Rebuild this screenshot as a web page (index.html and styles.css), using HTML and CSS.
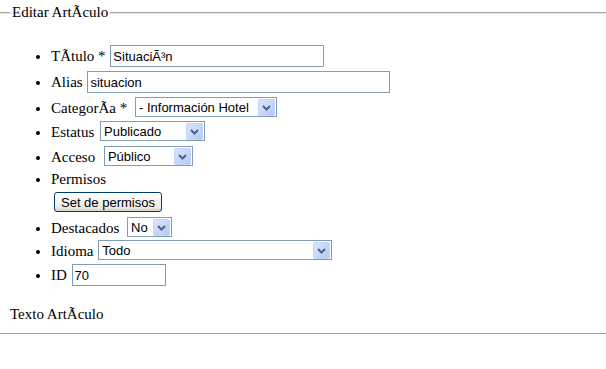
FILE: index.html
```html
<!doctype html>
<html lang="es">
<head>
  <meta charset="utf-8">
  <title>Editar ArtÃculo</title>
  <link rel="stylesheet" href="styles.css">
</head>
<body>
  <form class="edit-form">
    <fieldset class="edit-box">
      <legend>Editar ArtÃculo</legend>
      <ul class="field-list">
        <li class="row-txt">TÃtulo * <input class="txt txt-title" type="text" value="SituaciÃ³n"></li>
        <li class="row-txt">Alias <input class="txt txt-alias" type="text" value="situacion"></li>
        <li class="row-cat">CategorÃa * <select class="sel sel-cat"><option>- Información Hotel</option></select></li>
        <li class="row-sel">Estatus <select class="sel sel-status"><option>Publicado</option></select></li>
        <li class="row-sel">Acceso <select class="sel sel-access"><option>Público</option></select></li>
        <li class="row-perm">Permisos
          <div class="perm-btn-row"><button type="button" class="btn">Set de permisos</button></div>
        </li>
        <li class="row-feat">Destacados <select class="sel sel-featured"><option>No</option></select></li>
        <li class="row-lang">Idioma <select class="sel sel-lang"><option>Todo</option></select></li>
        <li class="row-id">ID <input class="txt txt-id" type="text" value="70"></li>
      </ul>
      <p class="body-label">Texto ArtÃculo</p>
    </fieldset>
  </form>
</body>
</html>
```

FILE: styles.css
```css
html, body {
  margin: 0;
  background: #fff;
  overflow: hidden;
}

body {
  font-family: 'Liberation Serif', 'Times New Roman', serif;
  font-size: 15px;
  color: #000;
}

.edit-box {
  margin: 4px -10px 0 0;
  padding: 0 0 10px 10px;
  border: 0;
  border-top: 1px solid #a3a49a;
  border-bottom: 1px solid #a3a49a;
  box-shadow: inset 0 1px 0 #e6e6de, 0 1px 0 #e6e6de;
}

.edit-box legend {
  padding: 0 2px;
  line-height: 17px;
}

.field-list {
  margin: 24px 0 0;
  padding-left: 41px;
}

.field-list li {
  line-height: 22px;
  height: 24px;
}

/* per-row heights to follow the original spacing */
.field-list .row-txt { height: 26px; }
.field-list .row-sel { height: 25px; }
.field-list .row-feat { height: 23px; }
.field-list .row-id { height: 22px; }

.field-list .row-perm {
  height: auto;
  line-height: 17px;
}

.txt,
.sel {
  font-family: 'Liberation Sans', Arial, sans-serif;
  font-size: 13px;
  color: #000;
  vertical-align: top;
  box-sizing: border-box;
  border: 1px solid #7f9db9;
  background-color: #fff;
  margin: 0 0 0 1px;
}

.txt {
  height: 22px;
  padding: 1px 2px;
}

.txt-title { width: 214px; }
.txt-alias { width: 303px; }
.txt-id { width: 94px; }

.sel {
  -webkit-appearance: none;
  appearance: none;
  height: 20px;
  padding: 0 20px 0 3px;
  border-radius: 0;
  background-image: url("data:image/svg+xml;utf8,<svg xmlns='http://www.w3.org/2000/svg' width='17' height='17'><defs><linearGradient id='g' x1='0' y1='0' x2='1' y2='1'><stop offset='0' stop-color='%23dbe6fd'/><stop offset='1' stop-color='%23b4c8f6'/></linearGradient></defs><rect x='0.5' y='0.5' width='16' height='16' rx='1' fill='url(%23g)' stroke='%23c3d3fd'/><path d='M5 7 L8.5 10.5 L12 7' fill='none' stroke='%234d6185' stroke-width='2'/></svg>");
  background-repeat: no-repeat;
  background-position: right 1px center;
}

.sel-cat { width: 142px; margin-left: 4px; }
.sel-status { width: 105px; margin-left: 2px; }
.sel-access { width: 89px; margin-left: 5px; }
.sel-featured { width: 45px; margin-left: 4px; }
.sel-lang { width: 234px; margin-left: 1px; }

.perm-btn-row {
  margin: 4px 0 5px 3px;
  line-height: 20px;
  height: 20px;
}

.btn {
  font-family: 'Liberation Sans', Arial, sans-serif;
  font-size: 13px;
  height: 20px;
  padding: 0 6px;
  border: 1px solid #003c74;
  border-radius: 3px;
  background: linear-gradient(#ffffff, #ecebe6 80%, #d6d0c5);
  color: #000;
  vertical-align: top;
}

.body-label {
  margin: 20px 0 0;
  line-height: 17px;
}
```
